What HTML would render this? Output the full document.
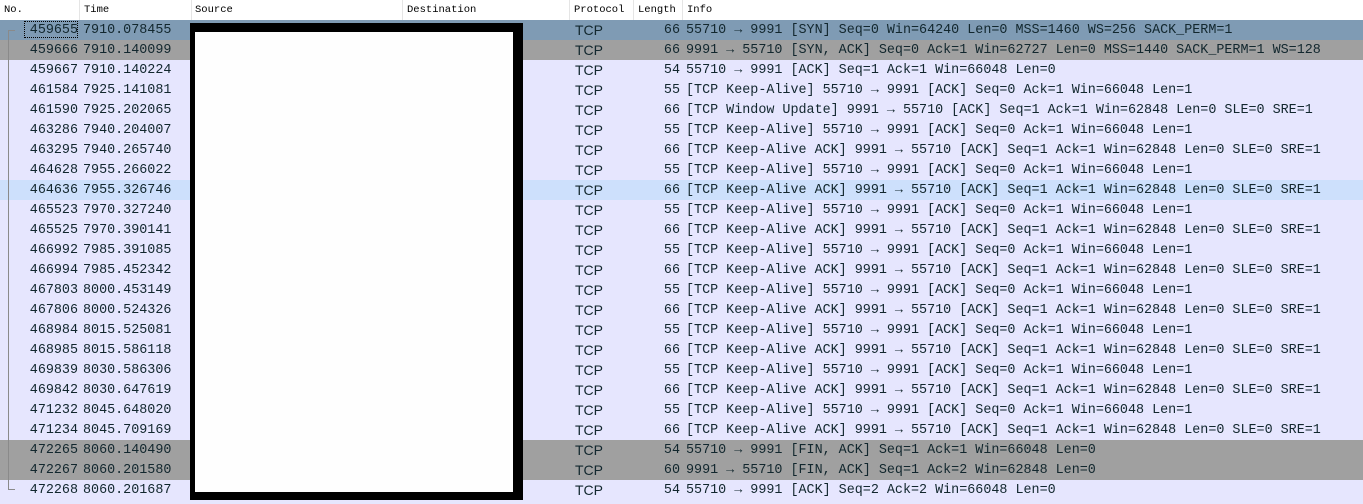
<!DOCTYPE html>
<html><head><meta charset="utf-8"><style>
body{margin:0;width:1363px;height:504px;overflow:hidden;background:#fff;position:relative;font-family:"Liberation Mono",monospace;}
.hdr{position:absolute;top:0;left:0;width:1363px;height:20px;background:#fff;font-size:10.5px;color:#000;}
.hdr span{position:absolute;top:4px;}
.sep{position:absolute;top:0;height:20px;width:1px;background:#e5e5e5;}
.row{position:absolute;left:0;width:1363px;height:20px;background:#e6e6fe;font-size:13.4px;color:#12272e;line-height:20px;white-space:pre;}
.row span{position:absolute;top:1px;}
.no{right:1285px;text-align:right;}
.t{left:83px}.p{left:575px;font-family:"Liberation Sans",sans-serif;font-size:14px;line-height:18px}.l{right:683px}.i{left:686px}
.syn{background:#7f9bb4}.g{background:#a0a0a0}.sel{background:#cde0fc}
</style></head><body>
<div class="hdr">
<span style="left:4px">No.</span><span style="left:84px">Time</span><span style="left:195px">Source</span><span style="left:407px">Destination</span><span style="left:574px">Protocol</span><span style="left:638px">Length</span><span style="left:687px">Info</span>
<div class="sep" style="left:79px"></div><div class="sep" style="left:191px"></div><div class="sep" style="left:402px"></div><div class="sep" style="left:569px"></div><div class="sep" style="left:633px"></div><div class="sep" style="left:682px"></div>
</div>
<div class="row syn" style="top:20px"><span class="no">459655</span><span class="t">7910.078455</span><span class="p">TCP</span><span class="l">66</span><span class="i">55710 → 9991 [SYN] Seq=0 Win=64240 Len=0 MSS=1460 WS=256 SACK_PERM=1</span></div>
<div class="row g" style="top:40px"><span class="no">459666</span><span class="t">7910.140099</span><span class="p">TCP</span><span class="l">66</span><span class="i">9991 → 55710 [SYN, ACK] Seq=0 Ack=1 Win=62727 Len=0 MSS=1440 SACK_PERM=1 WS=128</span></div>
<div class="row" style="top:60px"><span class="no">459667</span><span class="t">7910.140224</span><span class="p">TCP</span><span class="l">54</span><span class="i">55710 → 9991 [ACK] Seq=1 Ack=1 Win=66048 Len=0</span></div>
<div class="row" style="top:80px"><span class="no">461584</span><span class="t">7925.141081</span><span class="p">TCP</span><span class="l">55</span><span class="i">[TCP Keep-Alive] 55710 → 9991 [ACK] Seq=0 Ack=1 Win=66048 Len=1</span></div>
<div class="row" style="top:100px"><span class="no">461590</span><span class="t">7925.202065</span><span class="p">TCP</span><span class="l">66</span><span class="i">[TCP Window Update] 9991 → 55710 [ACK] Seq=1 Ack=1 Win=62848 Len=0 SLE=0 SRE=1</span></div>
<div class="row" style="top:120px"><span class="no">463286</span><span class="t">7940.204007</span><span class="p">TCP</span><span class="l">55</span><span class="i">[TCP Keep-Alive] 55710 → 9991 [ACK] Seq=0 Ack=1 Win=66048 Len=1</span></div>
<div class="row" style="top:140px"><span class="no">463295</span><span class="t">7940.265740</span><span class="p">TCP</span><span class="l">66</span><span class="i">[TCP Keep-Alive ACK] 9991 → 55710 [ACK] Seq=1 Ack=1 Win=62848 Len=0 SLE=0 SRE=1</span></div>
<div class="row" style="top:160px"><span class="no">464628</span><span class="t">7955.266022</span><span class="p">TCP</span><span class="l">55</span><span class="i">[TCP Keep-Alive] 55710 → 9991 [ACK] Seq=0 Ack=1 Win=66048 Len=1</span></div>
<div class="row sel" style="top:180px"><span class="no">464636</span><span class="t">7955.326746</span><span class="p">TCP</span><span class="l">66</span><span class="i">[TCP Keep-Alive ACK] 9991 → 55710 [ACK] Seq=1 Ack=1 Win=62848 Len=0 SLE=0 SRE=1</span></div>
<div class="row" style="top:200px"><span class="no">465523</span><span class="t">7970.327240</span><span class="p">TCP</span><span class="l">55</span><span class="i">[TCP Keep-Alive] 55710 → 9991 [ACK] Seq=0 Ack=1 Win=66048 Len=1</span></div>
<div class="row" style="top:220px"><span class="no">465525</span><span class="t">7970.390141</span><span class="p">TCP</span><span class="l">66</span><span class="i">[TCP Keep-Alive ACK] 9991 → 55710 [ACK] Seq=1 Ack=1 Win=62848 Len=0 SLE=0 SRE=1</span></div>
<div class="row" style="top:240px"><span class="no">466992</span><span class="t">7985.391085</span><span class="p">TCP</span><span class="l">55</span><span class="i">[TCP Keep-Alive] 55710 → 9991 [ACK] Seq=0 Ack=1 Win=66048 Len=1</span></div>
<div class="row" style="top:260px"><span class="no">466994</span><span class="t">7985.452342</span><span class="p">TCP</span><span class="l">66</span><span class="i">[TCP Keep-Alive ACK] 9991 → 55710 [ACK] Seq=1 Ack=1 Win=62848 Len=0 SLE=0 SRE=1</span></div>
<div class="row" style="top:280px"><span class="no">467803</span><span class="t">8000.453149</span><span class="p">TCP</span><span class="l">55</span><span class="i">[TCP Keep-Alive] 55710 → 9991 [ACK] Seq=0 Ack=1 Win=66048 Len=1</span></div>
<div class="row" style="top:300px"><span class="no">467806</span><span class="t">8000.524326</span><span class="p">TCP</span><span class="l">66</span><span class="i">[TCP Keep-Alive ACK] 9991 → 55710 [ACK] Seq=1 Ack=1 Win=62848 Len=0 SLE=0 SRE=1</span></div>
<div class="row" style="top:320px"><span class="no">468984</span><span class="t">8015.525081</span><span class="p">TCP</span><span class="l">55</span><span class="i">[TCP Keep-Alive] 55710 → 9991 [ACK] Seq=0 Ack=1 Win=66048 Len=1</span></div>
<div class="row" style="top:340px"><span class="no">468985</span><span class="t">8015.586118</span><span class="p">TCP</span><span class="l">66</span><span class="i">[TCP Keep-Alive ACK] 9991 → 55710 [ACK] Seq=1 Ack=1 Win=62848 Len=0 SLE=0 SRE=1</span></div>
<div class="row" style="top:360px"><span class="no">469839</span><span class="t">8030.586306</span><span class="p">TCP</span><span class="l">55</span><span class="i">[TCP Keep-Alive] 55710 → 9991 [ACK] Seq=0 Ack=1 Win=66048 Len=1</span></div>
<div class="row" style="top:380px"><span class="no">469842</span><span class="t">8030.647619</span><span class="p">TCP</span><span class="l">66</span><span class="i">[TCP Keep-Alive ACK] 9991 → 55710 [ACK] Seq=1 Ack=1 Win=62848 Len=0 SLE=0 SRE=1</span></div>
<div class="row" style="top:400px"><span class="no">471232</span><span class="t">8045.648020</span><span class="p">TCP</span><span class="l">55</span><span class="i">[TCP Keep-Alive] 55710 → 9991 [ACK] Seq=0 Ack=1 Win=66048 Len=1</span></div>
<div class="row" style="top:420px"><span class="no">471234</span><span class="t">8045.709169</span><span class="p">TCP</span><span class="l">66</span><span class="i">[TCP Keep-Alive ACK] 9991 → 55710 [ACK] Seq=1 Ack=1 Win=62848 Len=0 SLE=0 SRE=1</span></div>
<div class="row g" style="top:440px"><span class="no">472265</span><span class="t">8060.140490</span><span class="p">TCP</span><span class="l">54</span><span class="i">55710 → 9991 [FIN, ACK] Seq=1 Ack=1 Win=66048 Len=0</span></div>
<div class="row g" style="top:460px"><span class="no">472267</span><span class="t">8060.201580</span><span class="p">TCP</span><span class="l">60</span><span class="i">9991 → 55710 [FIN, ACK] Seq=1 Ack=2 Win=62848 Len=0</span></div>
<div class="row" style="top:480px;height:24px"><span class="no">472268</span><span class="t">8060.201687</span><span class="p">TCP</span><span class="l">54</span><span class="i">55710 → 9991 [ACK] Seq=2 Ack=2 Win=66048 Len=0</span></div>
<div style="position:absolute;left:8px;top:30px;width:1px;height:460px;background:#8a8a8a"></div>
<div style="position:absolute;left:8px;top:30px;width:7px;height:1px;background:#8a8a8a"></div>
<div style="position:absolute;left:8px;top:489px;width:7px;height:1px;background:#8a8a8a"></div>
<div style="position:absolute;left:24px;top:21px;width:54px;height:17px;border:1px dotted #000;box-sizing:border-box"></div>
<div style="position:absolute;left:190px;top:23px;width:333px;height:477px;background:#000"></div>
<div style="position:absolute;left:195px;top:32px;width:318px;height:460px;background:#fefefe"></div>
</body></html>
